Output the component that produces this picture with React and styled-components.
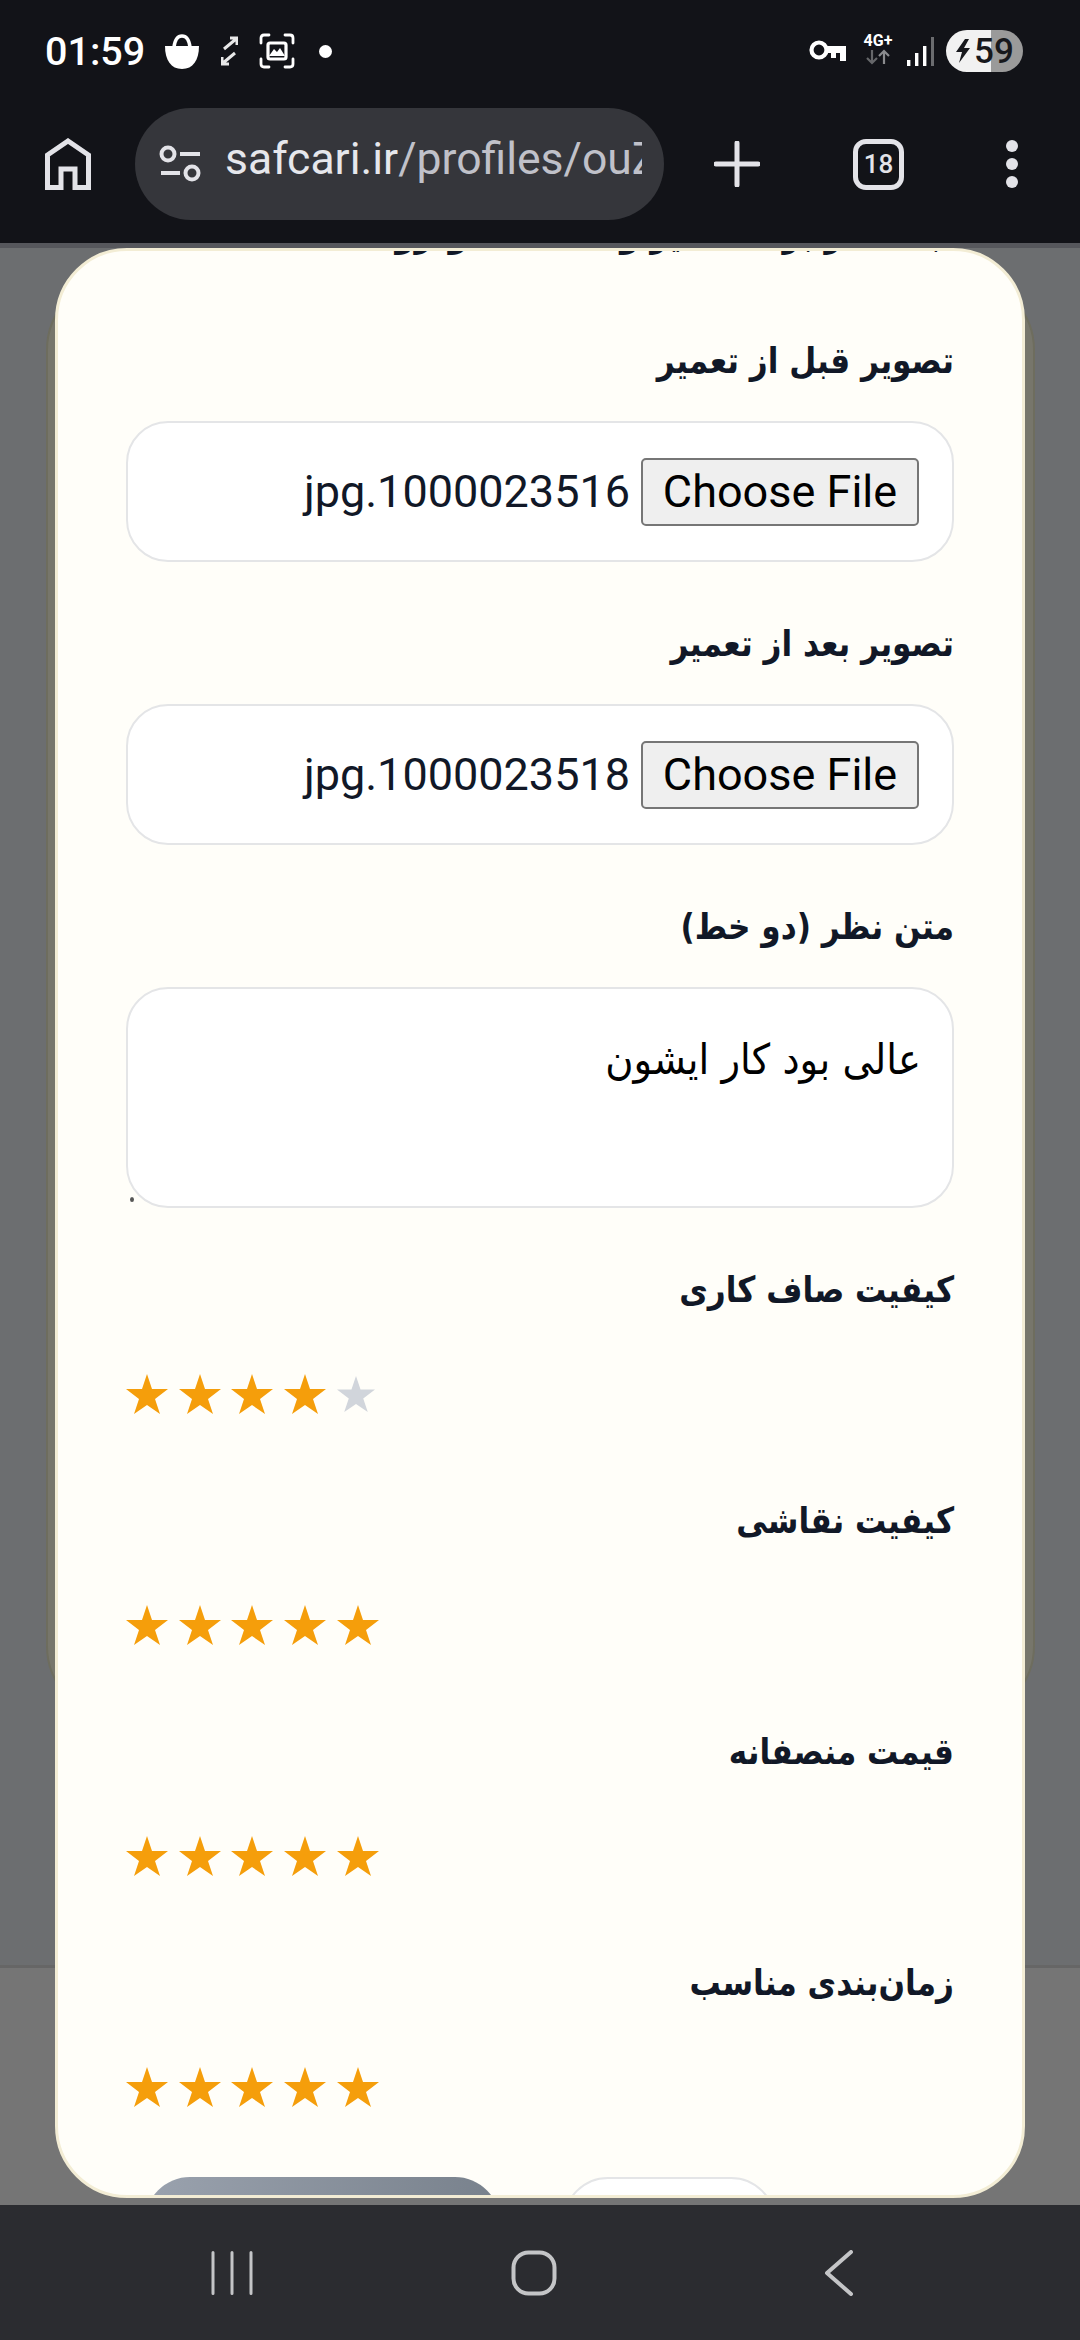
import React from "react";
import styled, { createGlobalStyle } from "styled-components";

const GlobalStyle = createGlobalStyle`
  html, body {
    margin: 0;
    padding: 0;
    background: #6f7070;
  }
  * {
    box-sizing: border-box;
  }
`;

const Screen = styled.div`
  width: 1080px;
  height: 2340px;
  display: flex;
  flex-direction: column;
  overflow: hidden;
  font-family: Roboto, "Liberation Sans", sans-serif;
`;

const Chrome = styled.header`
  height: 243px;
  flex: none;
  background: #121318;
  display: flex;
  flex-direction: column;
`;

const StatusBar = styled.div`
  height: 108px;
  padding: 0 57px 6px 45px;
  display: flex;
  align-items: center;
  justify-content: space-between;
`;

const StatusGroup = styled.div`
  display: flex;
  align-items: center;
`;

const Time = styled.span`
  color: #fff;
  font-size: 39.5px;
  font-weight: 500;
  margin-right: 20px;
`;

const Battery = styled.div`
  width: 77px;
  height: 42px;
  border-radius: 21px;
  margin-left: 12px;
  background: linear-gradient(90deg, #f1f1f1 0 45px, #9a9a9a 45px);
  color: #17181c;
  font-size: 35px;
  font-weight: 500;
  display: flex;
  align-items: center;
  padding-left: 28px;
  position: relative;
`;

const Toolbar = styled.div`
  height: 135px;
  padding: 0 0 23px 45px;
  display: flex;
  align-items: center;
`;

const UrlBar = styled.div`
  width: 529px;
  height: 112px;
  margin-left: 44px;
  border-radius: 56px;
  background: #35363b;
  padding: 0 22px 0 24px;
  display: flex;
  align-items: center;
  gap: 23px;
`;

const UrlText = styled.div`
  flex: 1;
  overflow: hidden;
  white-space: nowrap;
  color: #c0c1c9;
  font-size: 44.5px;
  margin-top: -10px;
  span {
    color: #e6e7ec;
  }
`;

const TabCount = styled.div`
  width: 51px;
  height: 51px;
  margin-left: 93px;
  border: 5px solid #e3e3e8;
  border-radius: 13px;
  color: #e3e3e8;
  font-size: 26px;
  font-weight: 500;
  display: flex;
  align-items: center;
  justify-content: center;
`;

const Divider = styled.div`
  height: 5px;
  flex: none;
  background: #56575c;
`;

const Backdrop = styled.main`
  flex: 1;
  min-height: 0;
  position: relative;
  padding: 0 55px 7px;
  background: linear-gradient(180deg, #6c6e70 0 1717px, #666 1717px 1720px, #757575 1720px);
`;

const PageCard = styled.div`
  position: absolute;
  left: 46px;
  right: 45px;
  top: 30px;
  height: 1440px;
  border: 2px solid #6e6d5e;
  border-radius: 72px;
  background: #77766b;
`;

const Modal = styled.section`
  position: relative;
  height: 100%;
  overflow: hidden;
  direction: rtl;
  background: #fffef9;
  border: 3px solid #f3edd5;
  border-radius: 72px;
  padding: 0 68px;
`;

const Form = styled.form`
  margin-top: -40px;
  display: flex;
  flex-direction: column;
`;

const Label = styled.label`
  display: block;
  color: #111827;
  font-family: "DejaVu Sans", sans-serif;
  font-size: 36px;
  font-weight: 700;
  line-height: 46px;
  white-space: nowrap;
  transform: scaleX(0.865);
  transform-origin: 100% 50%;
  margin-bottom: ${({ $gap }) => $gap || 37}px;
`;

const FileBox = styled.div`
  height: 141px;
  border: 2px solid #e4e5e7;
  border-radius: 42px;
  background: #fff;
  display: flex;
  align-items: center;
  gap: 11px;
  padding: 0 33px;
  margin-bottom: 59px;
`;

const ChooseButton = styled.button`
  width: 278px;
  height: 68px;
  padding: 0;
  border: 2px solid #767676;
  border-radius: 5px;
  background: #efefef;
  color: #000;
  font-family: Roboto, "Liberation Sans", sans-serif;
  font-size: 45px;
`;

const FileName = styled.span`
  color: #111827;
  font-size: 45px;
`;

const ReviewBox = styled.div`
  position: relative;
  height: 221px;
  border: 2px solid #e4e5e7;
  border-radius: 42px;
  background: #fff;
  padding: 43px 31px 0;
  margin-bottom: 59px;
`;

const ReviewText = styled.p`
  margin: 0;
  color: #000;
  font-family: "DejaVu Sans", sans-serif;
  font-size: 42px;
  line-height: 56px;
  transform: scaleX(0.917);
  transform-origin: 100% 50%;
`;

const ResizeDot = styled.span`
  position: absolute;
  left: 2px;
  bottom: 4px;
  width: 4px;
  height: 5px;
  border-radius: 50%;
  background: #555;
`;

const RatingGroup = styled.div`
  height: 231px;
`;

const Stars = styled.div`
  direction: ltr;
  display: flex;
  align-items: center;
  gap: 10.7px;
  height: 42px;
  margin-top: 60px;
`;

const Actions = styled.div`
  display: flex;
  align-items: flex-start;
  gap: 63px;
  padding: 0 178px 0 18px;
  margin-top: -14px;
`;

const SubmitButton = styled.div`
  width: 355px;
  height: 90px;
  border-radius: 45px;
  background: linear-gradient(90deg, #9aa2ae, #78818c);
`;

const CancelButton = styled.div`
  width: 213px;
  height: 90px;
  border: 2px solid #e4e5e7;
  border-radius: 45px;
  background: #fff;
`;

const NavBar = styled.nav`
  height: 135px;
  flex: none;
  background: #2b2c30;
  display: grid;
  grid-template-columns: 418px 232px 1fr;
  align-items: center;
`;

const NavSlot = styled.div`
  display: flex;
  justify-content: ${({ $align }) => $align};
  padding: ${({ $pad }) => $pad || 0};
`;

const Star = ({ on }) => (
  <svg width={on ? 42 : 38} height={on ? 42 : 38} viewBox="0 0 42 40" style={{ flex: "none" }}>
    <polygon
      points="21,0 26,15 42,15 29,25 34,40 21,31 8,40 13,25 0,15 16,15"
      fill={on ? "#f59e0b" : "#d1d5db"}
    />
  </svg>
);

const Rating = ({ label, value }) => (
  <RatingGroup>
    <Label>{label}</Label>
    <Stars>
      {[1, 2, 3, 4, 5].map((n) => (
        <Star key={n} on={n <= value} />
      ))}
    </Stars>
  </RatingGroup>
);

const FileField = ({ label, file }) => (
  <>
    <Label>{label}</Label>
    <FileBox>
      <ChooseButton type="button">Choose File</ChooseButton>
      <FileName>{file}</FileName>
    </FileBox>
  </>
);

const BagIcon = () => (
  <svg width="34" height="35" viewBox="0 0 34 35" style={{ marginRight: 22 }}>
    <path d="M0 12 H34 C34 26 28 35 17 35 C6 35 0 26 0 12Z" fill="#fff" />
    <path d="M9 13 C10 5 13 2 17 2 C21 2 24 5 25 13" fill="none" stroke="#fff" strokeWidth="3.5" />
  </svg>
);

const ExpandIcon = () => (
  <svg width="17" height="30" viewBox="0 0 17 30" style={{ marginRight: 21 }}>
    <path d="M9 2 H16 V9 M15 3 L3 13 M8 28 H1 V21 M2 27 L14 17" fill="none" stroke="#e8e8e8" strokeWidth="3" />
  </svg>
);

const ScreenshotIcon = () => (
  <svg width="36" height="36" viewBox="0 0 36 36" style={{ marginRight: 24 }}>
    <path
      d="M2 10 V5 Q2 2 5 2 H10 M26 2 H31 Q34 2 34 5 V10 M34 26 V31 Q34 34 31 34 H26 M10 34 H5 Q2 34 2 31 V26"
      fill="none"
      stroke="#fff"
      strokeWidth="2.8"
      strokeLinecap="round"
    />
    <rect x="9" y="10" width="18" height="16" rx="2" fill="none" stroke="#fff" strokeWidth="3.2" />
    <path d="M10 23 L15 16 L18 19 L21 15 L26 23Z" fill="#fff" />
  </svg>
);

const Dot = styled.span`
  width: 13px;
  height: 13px;
  border-radius: 50%;
  background: #fff;
`;

const KeyIcon = () => (
  <svg width="38" height="22" viewBox="0 0 38 22" style={{ marginRight: 14 }}>
    <circle cx="10" cy="10" r="7.5" fill="none" stroke="#fff" strokeWidth="4.2" />
    <path d="M17 6 H37 V21 H31 V13 H27 V18 H22 V13 H17Z" fill="#fff" />
  </svg>
);

const NetworkBlock = styled.div`
  width: 34px;
  height: 36px;
  margin-right: 12px;
  color: #fff;
  font-size: 16px;
  font-weight: 700;
  line-height: 16px;
  text-align: center;
  white-space: nowrap;
  display: flex;
  flex-direction: column;
  align-items: center;
`;

const DataArrows = () => (
  <svg width="24" height="16" viewBox="0 0 24 16">
    <path d="M6 1 V14 M1 9 L6 14 L11 9" fill="none" stroke="#66676a" strokeWidth="2.2" />
    <path d="M18 15 V2 M13 7 L18 2 L23 7" fill="none" stroke="#8a8b8e" strokeWidth="2.2" />
  </svg>
);

const SignalIcon = () => (
  <svg width="27" height="29" viewBox="0 0 27 29">
    <rect x="0" y="23" width="3.4" height="6" fill="#fff" />
    <rect x="8" y="16" width="3.4" height="13" fill="#fff" />
    <rect x="16" y="9" width="3.4" height="20" fill="#fff" />
    <rect x="24" y="0" width="3" height="29" fill="#6b6c6f" />
  </svg>
);

const BoltIcon = () => (
  <svg width="16" height="24" viewBox="0 0 16 24" style={{ position: "absolute", left: 9, top: 9 }}>
    <path d="M10 0 L1 13 H7 L4 24 L15 9 H9 L14 0Z" fill="#17181c" />
  </svg>
);

const HomeIcon = () => (
  <svg width="46" height="52" viewBox="0 0 46 52">
    <path
      d="M2.5 49.5 V17 L23 3 L43.5 17 V49.5 H30 V31 H16 V49.5Z"
      fill="none"
      stroke="#e3e3e8"
      strokeWidth="5"
    />
  </svg>
);

const SiteIcon = () => (
  <svg width="43" height="38" viewBox="0 0 43 38" style={{ flex: "none" }}>
    <circle cx="9" cy="9" r="6.5" fill="none" stroke="#e3e3e8" strokeWidth="4" />
    <path d="M21 9 H41 M2 28 H21" stroke="#e3e3e8" strokeWidth="4" />
    <circle cx="33" cy="28" r="6.5" fill="none" stroke="#e3e3e8" strokeWidth="4" />
  </svg>
);

const PlusIcon = () => (
  <svg width="46" height="46" viewBox="0 0 46 46" style={{ marginLeft: 50 }}>
    <path d="M23 2 V44 M2 23 H44" stroke="#e3e3e8" strokeWidth="5" strokeLinecap="round" />
  </svg>
);

const MoreIcon = () => (
  <svg width="12" height="48" viewBox="0 0 12 48" style={{ marginLeft: 102 }}>
    <circle cx="6" cy="6" r="6" fill="#e3e3e8" />
    <circle cx="6" cy="24" r="6" fill="#e3e3e8" />
    <circle cx="6" cy="42" r="6" fill="#e3e3e8" />
  </svg>
);

const RecentsIcon = () => (
  <svg width="42" height="44" viewBox="0 0 42 44">
    <path d="M2 1.5 V42.5 M21 1.5 V42.5 M40 1.5 V42.5" stroke="#c4c5c7" strokeWidth="3" strokeLinecap="round" />
  </svg>
);

const NavHomeIcon = () => (
  <svg width="46" height="46" viewBox="0 0 46 46">
    <rect x="2.5" y="2.5" width="41" height="41" rx="15" fill="none" stroke="#c4c5c7" strokeWidth="4" />
  </svg>
);

const BackIcon = () => (
  <svg width="30" height="46" viewBox="0 0 30 46">
    <path d="M27 2 L3 23 L27 44" fill="none" stroke="#c4c5c7" strokeWidth="4" strokeLinecap="round" strokeLinejoin="round" />
  </svg>
);

export default function App() {
  return (
    <>
      <GlobalStyle />
      <Screen>
        <Chrome>
          <StatusBar>
            <StatusGroup>
              <Time>01:59</Time>
              <BagIcon />
              <ExpandIcon />
              <ScreenshotIcon />
              <Dot />
            </StatusGroup>
            <StatusGroup>
              <KeyIcon />
              <NetworkBlock>
                4G+
                <DataArrows />
              </NetworkBlock>
              <SignalIcon />
              <Battery>
                <BoltIcon />
                59
              </Battery>
            </StatusGroup>
          </StatusBar>
          <Toolbar>
            <HomeIcon />
            <UrlBar>
              <SiteIcon />
              <UrlText>
                <span>safcari.ir</span>/profiles/ouZ
              </UrlText>
            </UrlBar>
            <PlusIcon />
            <TabCount>18</TabCount>
            <MoreIcon />
          </Toolbar>
        </Chrome>
        <Divider />
        <Backdrop>
          <PageCard />
          <Modal>
            <Form>
              <Label $gap={81}>ثبت نظر برای تعمیر و نقاشی خودرو</Label>
              <FileField label="تصویر قبل از تعمیر" file="1000023516.jpg" />
              <FileField label="تصویر بعد از تعمیر" file="1000023518.jpg" />
              <Label>متن نظر (دو خط)</Label>
              <ReviewBox>
                <ReviewText>عالی بود کار ایشون</ReviewText>
                <ResizeDot />
              </ReviewBox>
              <Rating label="کیفیت صاف کاری" value={4} />
              <Rating label="کیفیت نقاشی" value={5} />
              <Rating label="قیمت منصفانه" value={5} />
              <Rating label="زمان‌بندی مناسب" value={5} />
              <Actions>
                <CancelButton />
                <SubmitButton />
              </Actions>
            </Form>
          </Modal>
        </Backdrop>
        <NavBar>
          <NavSlot $align="flex-end" $pad="0 165px 0 0">
            <RecentsIcon />
          </NavSlot>
          <NavSlot $align="center">
            <NavHomeIcon />
          </NavSlot>
          <NavSlot $align="flex-start" $pad="0 0 0 174px">
            <BackIcon />
          </NavSlot>
        </NavBar>
      </Screen>
    </>
  );
}
